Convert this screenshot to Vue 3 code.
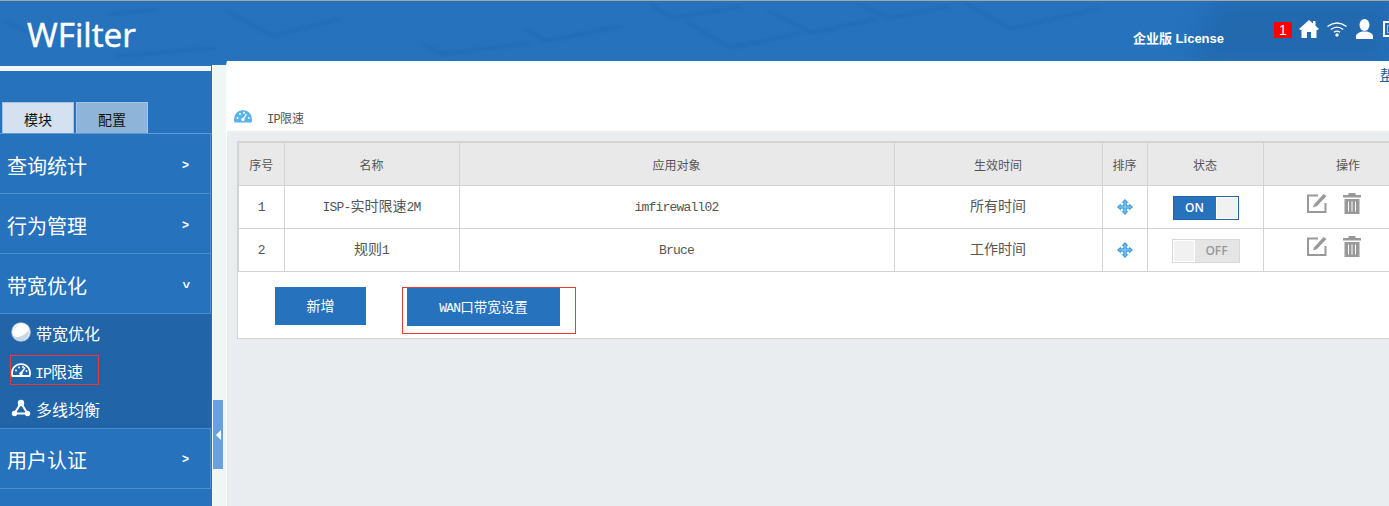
<script setup>
const rows = [
  { id: 1, name: 'ISP-实时限速', suffix: '2M', target: 'imfirewall02', time: '所有时间', on: true },
  { id: 2, name: '规则', suffix: '1', target: 'Bruce', time: '工作时间', on: false },
]
</script>

<template>
  <div class="page">
    <header class="top">
      <svg class="texture" viewBox="0 0 1389 60" preserveAspectRatio="none">
        <path class="patch" d="M1215 0 H1389 V60 H1190 Z" />
        <g class="keys">
          <path d="M5 20 L30 32 M110 13 L157 9" />
          <path d="M226 10 L273 35 L340 18" />
          <path d="M117 55 L217 47" />
          <path d="M423 43 L443 53 L529 42" />
          <path d="M525 27 L545 40 L624 25" />
          <path d="M650 3 L672 17 L742 5" />
          <path d="M685 20 L730 47 L800 32" />
          <path d="M768 10 L813 32 L876 18" />
          <path d="M857 2 L889 17 L950 5" />
          <path d="M966 2 L1010 28 L1100 7" />
        </g>
      </svg>
      <div class="logo">WFilter</div>
      <div class="top-right">
        <span class="license">企业版 License</span>
        <span class="badge">1</span>
        <svg class="ic home" viewBox="0 0 20 18"><path d="M10 0 L14 3.600 V1 H16.500 V5.800 L20 9 L18.500 10 H17.500 V18 H12 V12 H8 V18 H2.500 V10 H1.500 L0 9 Z" fill="#fff" /></svg>
        <svg class="ic wifi" viewBox="0 0 20 15"><g fill="none" stroke="#fff" stroke-width="1.400"><path d="M.5 4.500 Q10 -2.500 19.500 4.500" /><path d="M3.800 7.500 Q10 2.800 16.200 7.500" /><path d="M7 10.300 Q10 8 13 10.300" /></g><circle cx="10" cy="13" r="1.700" fill="#fff" /></svg>
        <svg class="ic user" viewBox="0 0 17 20"><ellipse cx="8.500" cy="6" rx="5" ry="6" fill="#fff" /><path d="M0 20 V16.500 Q1 14 6 12.500 H11 Q16 14 17 16.500 V20 Z" fill="#fff" /></svg>
        <svg class="ic screen" viewBox="0 0 16 16"><rect x="1" y="1" width="14" height="14" fill="none" stroke="#fff" stroke-width="2" /><rect x="4.500" y="4.500" width="7" height="7" fill="none" stroke="#9dc0e0" /></svg>
      </div>
    </header>

    <div class="body">
      <aside class="side">
        <div class="stripe"></div>
        <div class="tabs">
          <span class="tab active">模块</span>
          <span class="tab">配置</span>
        </div>
        <div class="item"><span>查询统计</span><span class="arrow">&gt;</span></div>
        <div class="item"><span>行为管理</span><span class="arrow">&gt;</span></div>
        <div class="item"><span>带宽优化</span><span class="arrow down">&gt;</span></div>
        <div class="sub">
          <div class="sub-row">
            <svg class="sub-ic round" viewBox="0 0 20 20"><circle cx="10" cy="10" r="9.800" fill="#a8c3df" /><circle cx="10" cy="9.800" r="8.800" fill="#fff" /><path d="M2 9 Q3 3 10 2 Q5 5 2 9Z" fill="#dce7f2" /><path d="M2.500 14 Q10 17.500 18 8 Q18.500 16 11 18.500 Q5 18.500 2.500 14Z" fill="#c6d7e9" /></svg>
            <span class="lbl">带宽优化</span>
          </div>
          <div class="sub-row">
            <span class="mark">
              <svg class="sub-ic" viewBox="0 0 20 15"><path d="M1.500 13.500 A9 9 0 1 1 18.500 13.500 Z" fill="none" stroke="#fff" stroke-width="1.800" /><path d="M10 11 L14 5" stroke="#fff" stroke-width="1.500" /><circle cx="10" cy="11" r="1.700" fill="#fff" /><g fill="#fff"><circle cx="5" cy="8" r="1" /><circle cx="8" cy="5" r="1" /><circle cx="12" cy="4.500" r="1" /><circle cx="15.500" cy="8.500" r="1" /></g></svg>
              <span class="lbl"><i class="lat">IP</i>限速</span>
            </span>
          </div>
          <div class="sub-row">
            <svg class="sub-ic" viewBox="0 0 20 18"><path d="M10 4 L3.500 14.500 H16.500 Z" fill="none" stroke="#fff" stroke-width="2" /><circle cx="10" cy="4" r="3.200" fill="#fff" /><circle cx="3.500" cy="14.500" r="2.700" fill="#fff" /><circle cx="16.500" cy="14.500" r="2.700" fill="#fff" /></svg>
            <span class="lbl">多线均衡</span>
          </div>
        </div>
        <div class="item last"><span>用户认证</span><span class="arrow">&gt;</span></div>
      </aside>

      <div class="rail"><div class="handle"><span class="tri"></span></div></div>

      <main class="main">
        <div class="head">
          <a class="help">帮助</a>
          <div class="title">
            <svg class="title-ic" viewBox="0 0 18 13"><path d="M1 12.500 Q0 12.500 0 10 Q0 1 9 0 Q18 1 18 10 Q18 12.500 17 12.500 Z" fill="#58b3ea" /><path d="M9 9.500 L12.500 4" stroke="#fff" stroke-width="1.300" /><g fill="#fff"><circle cx="9" cy="9.500" r="1.700" /><circle cx="3.500" cy="8" r="1" /><circle cx="6" cy="4" r="1" /><circle cx="10" cy="2.800" r="1" /><circle cx="14.800" cy="8" r="1" /></g></svg>
            <span class="title-text"><i class="lat">IP</i>限速</span>
          </div>
        </div>
        <div class="content">
          <section class="panel">
            <table class="grid">
              <colgroup>
                <col style="width:46px" /><col style="width:175px" /><col style="width:435px" /><col style="width:208px" /><col style="width:45px" /><col style="width:116px" /><col style="width:170px" />
              </colgroup>
              <thead>
                <tr><th>序号</th><th>名称</th><th>应用对象</th><th>生效时间</th><th>排序</th><th>状态</th><th>操作</th></tr>
              </thead>
              <tbody>
                <tr v-for="r in rows" :key="r.id">
                  <td class="txt"><i class="lat">{{ r.id }}</i></td>
                  <td class="txt"><template v-if="r.id === 1"><i class="lat">ISP-</i>实时限速</template><template v-else>规则</template><i class="lat">{{ r.suffix }}</i></td>
                  <td class="txt"><i class="lat">{{ r.target }}</i></td>
                  <td class="txt">{{ r.time }}</td>
                  <td>
                    <svg class="move" viewBox="0 0 16 16"><path d="M8 0 L11.500 3.800 H9.800 V6.200 H12.200 V4.500 L16 8 L12.200 11.500 V9.800 H9.800 V12.200 H11.500 L8 16 L4.500 12.200 H6.200 V9.800 H3.800 V11.500 L0 8 L3.800 4.500 V6.200 H6.200 V3.800 H4.500 Z" fill="#3f9be0" /><path d="M8 2 V14 M2 8 H14" stroke="#9ad0f5" stroke-width="1" /></svg>
                  </td>
                  <td>
                    <div class="switch" :class="r.on ? 'on' : 'off'">
                      <template v-if="r.on"><span class="sw-label">ON</span><span class="knob"></span></template>
                      <template v-else><span class="knob"></span><span class="sw-label">OFF</span></template>
                    </div>
                  </td>
                  <td>
                    <div class="ops">
                      <svg class="op" viewBox="0 0 20 20"><path d="M11 2.500 H1 V19 H18.500 V10" fill="none" stroke="#999" stroke-width="2" /><path d="M6 14.500 L7 11.500 L16.500 1 L19.500 3 L10 13 Z" fill="#999" /></svg>
                      <svg class="op trash" viewBox="0 0 18 21"><path d="M6 0 H12 L13 2 H18 V4.500 H0 V2 H5 Z M1.500 6 H16.500 V21 H1.500 Z" fill="#999" /><path d="M5.500 8.500 V18.500 M9 8.500 V18.500 M12.500 8.500 V18.500" stroke="#fff" stroke-width="1" /></svg>
                    </div>
                  </td>
                </tr>
              </tbody>
            </table>
            <div class="actions">
              <button class="btn add">新增</button>
              <div class="outline"><button class="btn wan"><i class="lat">WAN</i>口带宽设置</button></div>
            </div>
          </section>
        </div>
      </main>
    </div>
  </div>
</template>

<style>
html, body { margin: 0; overflow: hidden; }
</style>

<style scoped>
.page {
  width: 1389px;
  height: 506px;
  overflow: hidden;
  display: flex;
  flex-direction: column;
  font-family: "Noto Sans CJK SC", "Liberation Sans", sans-serif;
  font-size: 14px;
  color: #555;
  background: #e9edf0;
}
.lat { font-style: normal; font-family: "Liberation Mono", monospace; font-size: 13px; letter-spacing: -0.8px; }
.top {
  position: relative;
  flex: none;
  height: 60px;
  border-top: 1px solid #a3a5a6;
  background: #2672bd;
  display: flex;
  justify-content: space-between;
  align-items: flex-start;
  overflow: hidden;
}
.texture { position: absolute; inset: 0; width: 100%; height: 100%; }
.keys { fill: none; stroke: #2064a9; stroke-width: 3; opacity: .4; filter: blur(1.500px); }
.patch { fill: #2064a6; opacity: .65; filter: blur(12px); }
.logo {
  position: relative;
  margin: 11px 0 0 27px;
  font: 400 33.300px/44px "Open Sans", "Liberation Sans", sans-serif;
  -webkit-text-stroke: .5px #fff;
  color: #fff;
}
.top-right {
  position: relative;
  display: flex;
  align-items: flex-start;
  width: 260px;
  flex: none;
  margin-right: -4px;
}
.license {
  margin-top: 29px;
  width: 141px;
  flex: none;
  font: bold 13px/18px "Liberation Sans", "Noto Sans CJK SC", sans-serif;
  color: #fff;
}
.badge {
  margin-top: 21px;
  width: 18px;
  height: 16px;
  flex: none;
  background: #f00;
  color: #fff;
  font: 14px/16px "Liberation Sans", sans-serif;
  text-align: center;
}
.ic { flex: none; display: block; }
.home { width: 20px; height: 18px; margin: 19px 0 0 7px; }
.wifi { width: 20px; height: 15px; margin: 21px 0 0 8px; }
.user { width: 17px; height: 20px; margin: 18px 0 0 9px; }
.screen { width: 16px; height: 16px; margin: 20px 0 0 10px; }

.body { flex: 1; display: flex; min-height: 0; }
.side {
  width: 212px;
  flex: none;
  background: #2672bd;
  color: #fff;
  box-sizing: border-box;
}
.stripe { height: 5px; margin-top: 5px; width: 211px; background: #f0f7f5; }
.tabs { display: flex; gap: 2px; padding: 31px 0 0 2px; height: 31px; border-bottom: 1px solid #5e9bd6; }
.tab {
  width: 72px;
  height: 31px;
  box-sizing: border-box;
  border: 1px solid #a8c3e0;
  border-bottom: 0;
  background: #8fb4da;
  color: #111;
  font-size: 14px;
  line-height: 33px;
  text-align: center;
}
.tab.active { background: #d3e1f0; }
.item {
  border-bottom: 1px solid #4a8ed2;
  border-right: 1px solid #4a8ed2;
  margin-right: 1px;
  padding: 3px 21px 0 7px;
  height: 56px;
  display: flex;
  align-items: center;
  justify-content: space-between;
  font-size: 20px;
  color: #fff;
}
.item.last { padding-top: 2px; height: 57px; }
.arrow { font: bold 12px "Liberation Sans", sans-serif; margin-top: -1px; }
.arrow.down { transform: rotate(90deg); }
.sub { height: 115px; background: #2165a8; display: flex; flex-direction: column; box-sizing: border-box; border-bottom: 1px solid #4a8ed2; margin-right: 1px; }
.sub-row { height: 38px; box-sizing: border-box; padding: 0 0 2px 11px; flex: none; display: flex; align-items: center; gap: 5px; font-size: 16px; }
.lbl { padding-top: 2px; }
.sub-ic { width: 20px; height: 18px; flex: none; }
.sub-ic.round { height: 20px; }
.mark {
  display: flex;
  align-items: center;
  gap: 4px;
  margin-left: -1px;
  width: 89px;
  height: 30px;
  box-sizing: border-box;
  border: 1px solid #e83a3a;
}
.mark .lat { font-size: 15px; letter-spacing: -1px; }

.rail {
  width: 14px;
  flex: none;
  background: #eff7f5;
  border-top: 4px solid #2672bd;
  border-right: 1px solid #fff;
  display: flex;
  flex-direction: column;
  justify-content: flex-end;
  padding-bottom: 37px;
}
.handle {
  width: 10px;
  height: 69px;
  margin-left: 1px;
  background: #6a9fe0;
  display: flex;
  align-items: center;
  justify-content: center;
}
.tri { border: 5px solid transparent; border-right: 5px solid #fff; border-left: 0; }

.main { flex: 1; min-width: 0; overflow: hidden; display: flex; flex-direction: column; }
.head { height: 70px; background: #fff; flex: none; position: relative; display: flex; flex-direction: column; }
.help {
  align-self: flex-end;
  margin: 4px -19px 0 0;
  color: #1d5c9c;
  text-decoration: underline;
  font-size: 14px;
  line-height: 18px;
}
.title { margin-top: 24px; padding-left: 7px; display: flex; align-items: flex-start; font-size: 12px; color: #555; gap: 15px; }
.title .lat { font-size: 12px; letter-spacing: -.7px; }
.title-ic { width: 18px; height: 13px; flex: none; margin-top: 3px; }
.title-text { margin-top: 2px; }
.content { flex: 1; padding: 10px 0 0 10px; }
.panel {
  width: 1210px;
  height: 198px;
  box-sizing: border-box;
  background: #fff;
  border: 1px solid #d3d3d3;
  border-top: 0;
}
.grid {
  border-collapse: collapse;
  table-layout: fixed;
  width: 1195px;
  margin-left: -1px;
  border-top: 2px solid #d3d3d3;
  border-left: 2px solid #d3d3d3;
}
.grid th, .grid td {
  border: 1px solid #d3d3d3;
  border-top: 0;
  text-align: center;
  padding: 0;
  font-weight: 400;
  color: #555;
}
.grid th { height: 42px; background: #e9e9e9; font-size: 12px; }
.grid td { height: 43px; box-sizing: border-box; font-size: 14px; vertical-align: middle; }
.grid td.txt { padding-bottom: 4px; }
.move { width: 16px; height: 16px; display: block; margin: 0 auto; }
.switch {
  height: 24px;
  margin: 2px 0 0 25px;
  box-sizing: border-box;
  display: flex;
  align-items: stretch;
  font: 600 12px/22px "Open Sans", "Liberation Sans", sans-serif;
}
.switch.on { width: 66px; background: #2672bd; border: 1px solid #2165a8; color: #fff; }
.switch.off { width: 68px; margin-left: 24px; background: #e5e5e5; border: 1px solid #d8d8d8; color: #999; }
.sw-label { flex: 1; text-align: center; }
.knob { width: 22px; background: #f1f1f1; border: 1px solid #fff; box-sizing: border-box; }
.ops { display: flex; justify-content: flex-start; gap: 16px; padding-left: 43px; margin-top: -7px; }
.op { width: 20px; height: 20px; flex: none; }
.trash { width: 18px; height: 21px; }
.actions { display: flex; align-items: flex-start; padding: 15px 0 0 37px; }
.btn {
  height: 38px;
  border: 0;
  padding: 0 0 2px;
  background: #2672bd;
  color: #fff;
  font-family: inherit;
  font-size: 14px;
}
.add { width: 91px; }
.outline {
  margin-left: 36px;
  width: 174px;
  height: 47px;
  box-sizing: border-box;
  border: 1px solid #e83a3a;
  padding: 0 0 0 4px;
}
.wan { width: 153px; font-size: 13.500px; }
</style>
